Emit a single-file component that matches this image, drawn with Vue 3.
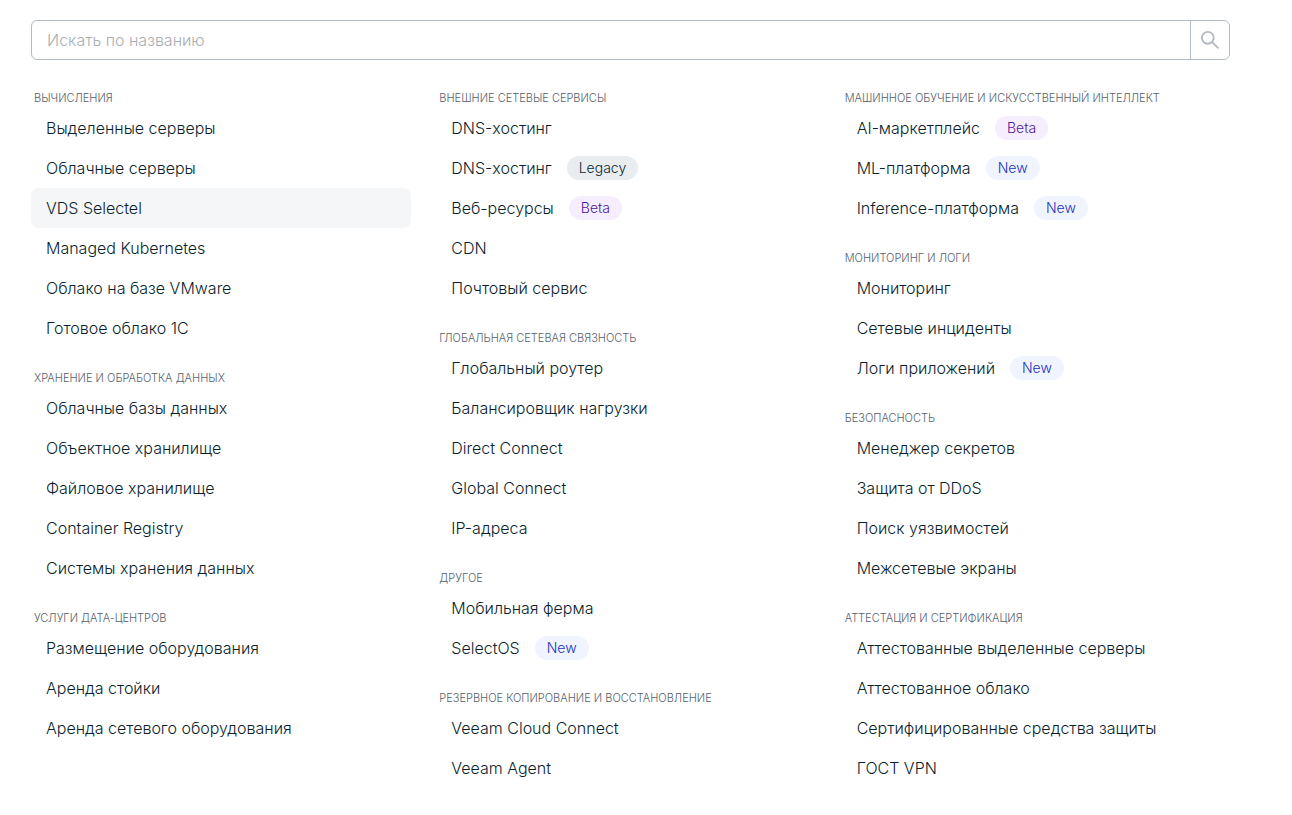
<script setup>
const columns = [
  [
    { title: 'Вычисления', items: [
      { name: 'Выделенные серверы' },
      { name: 'Облачные серверы' },
      { name: 'VDS Selectel', active: true },
      { name: 'Managed Kubernetes' },
      { name: 'Облако на базе VMware' },
      { name: 'Готовое облако 1С' },
    ] },
    { title: 'Хранение и обработка данных', items: [
      { name: 'Облачные базы данных' },
      { name: 'Объектное хранилище' },
      { name: 'Файловое хранилище' },
      { name: 'Container Registry' },
      { name: 'Системы хранения данных' },
    ] },
    { title: 'Услуги дата-центров', items: [
      { name: 'Размещение оборудования' },
      { name: 'Аренда стойки' },
      { name: 'Аренда сетевого оборудования' },
    ] },
  ],
  [
    { title: 'Внешние сетевые сервисы', items: [
      { name: 'DNS-хостинг' },
      { name: 'DNS-хостинг', badge: 'Legacy' },
      { name: 'Веб-ресурсы', badge: 'Beta' },
      { name: 'CDN' },
      { name: 'Почтовый сервис' },
    ] },
    { title: 'Глобальная сетевая связность', items: [
      { name: 'Глобальный роутер' },
      { name: 'Балансировщик нагрузки' },
      { name: 'Direct Connect' },
      { name: 'Global Connect' },
      { name: 'IP-адреса' },
    ] },
    { title: 'Другое', items: [
      { name: 'Мобильная ферма' },
      { name: 'SelectOS', badge: 'New' },
    ] },
    { title: 'Резервное копирование и восстановление', items: [
      { name: 'Veeam Cloud Connect' },
      { name: 'Veeam Agent' },
    ] },
  ],
  [
    { title: 'Машинное обучение и искусственный интеллект', items: [
      { name: 'AI-маркетплейс', badge: 'Beta' },
      { name: 'ML-платформа', badge: 'New' },
      { name: 'Inference-платформа', badge: 'New' },
    ] },
    { title: 'Мониторинг и логи', items: [
      { name: 'Мониторинг' },
      { name: 'Сетевые инциденты' },
      { name: 'Логи приложений', badge: 'New' },
    ] },
    { title: 'Безопасность', items: [
      { name: 'Менеджер секретов' },
      { name: 'Защита от DDoS' },
      { name: 'Поиск уязвимостей' },
      { name: 'Межсетевые экраны' },
    ] },
    { title: 'Аттестация и сертификация', items: [
      { name: 'Аттестованные выделенные серверы' },
      { name: 'Аттестованное облако' },
      { name: 'Сертифицированные средства защиты' },
      { name: 'ГОСТ VPN' },
    ] },
  ],
]
</script>

<template>
  <main class="menu">
    <form class="search" role="search" @submit.prevent>
      <input class="field" type="text" placeholder="Искать по названию" aria-label="Искать по названию">
      <button class="submit" type="submit" aria-label="Найти">
        <svg width="20" height="20" viewBox="0 0 20 20" fill="none" stroke="currentColor" stroke-width="1.9">
          <circle cx="7.8" cy="7.8" r="5.9" />
          <path d="M12.2 12.2L18.4 18.4" />
        </svg>
      </button>
    </form>
    <nav class="columns">
      <div v-for="(groups, i) in columns" :key="i">
        <section v-for="group in groups" :key="group.title" class="group">
          <h2 class="title">{{ group.title }}</h2>
          <ul class="list">
            <li v-for="(item, j) in group.items" :key="j">
              <a href="#" class="item" :class="{ active: item.active }">
                <span>{{ item.name }}</span>
                <span v-if="item.badge" class="badge" :class="item.badge.toLowerCase()">{{ item.badge }}</span>
              </a>
            </li>
          </ul>
        </section>
      </div>
    </nav>
  </main>
</template>

<style>
body {
  background: #fff;
}
</style>

<style scoped>
.menu {
  padding: 20px 62px 24px 31px;
  font-family: Inter, "Noto Sans", sans-serif;
  font-weight: 300;
  color: #0a1f2e;
}
.search {
  display: flex;
  box-sizing: border-box;
  height: 40px;
  border: 1px solid #b3bbc2;
  border-radius: 6px;
}
.field {
  flex: 1;
  min-width: 0;
  padding: 0 15px;
  border: 0;
  outline: 0;
  background: transparent;
  font: inherit;
  font-size: 16px;
  color: inherit;
}
.field::placeholder {
  color: #a9aeb2;
  opacity: 1;
}
.submit {
  display: flex;
  align-items: center;
  justify-content: center;
  width: 39px;
  padding: 0;
  border: 0;
  border-left: 1px solid #b3bbc2;
  background: transparent;
  color: #b3bbc2;
}
.columns {
  display: grid;
  grid-template-columns: repeat(3, minmax(0, 1fr));
  column-gap: 17px;
  padding-top: 8px;
}
.group {
  padding-top: 22px;
}
.title {
  margin: 0;
  padding: 0 3px 2px;
  font-size: 11px;
  line-height: 16px;
  font-weight: 300;
  text-transform: uppercase;
  white-space: nowrap;
  color: #55616c;
}
.list {
  margin: 0;
  padding: 0;
  list-style: none;
}
.item {
  display: flex;
  align-items: center;
  height: 40px;
  margin-right: 8px;
  padding: 0 15px;
  box-sizing: border-box;
  border-radius: 8px;
  font-size: 16px;
  line-height: 24px;
  white-space: nowrap;
  text-decoration: none;
  color: inherit;
}
.active {
  background: #f5f6f8;
}
.badge {
  margin-left: 15px;
  padding: 0 12px;
  border-radius: 12px;
  font-size: 14px;
  line-height: 24px;
}
.legacy {
  background: #e9edf0;
}
.beta {
  background: #f6eefe;
  color: #4c1699;
}
.new {
  background: #eff4ff;
  color: #1c31bd;
}
</style>
